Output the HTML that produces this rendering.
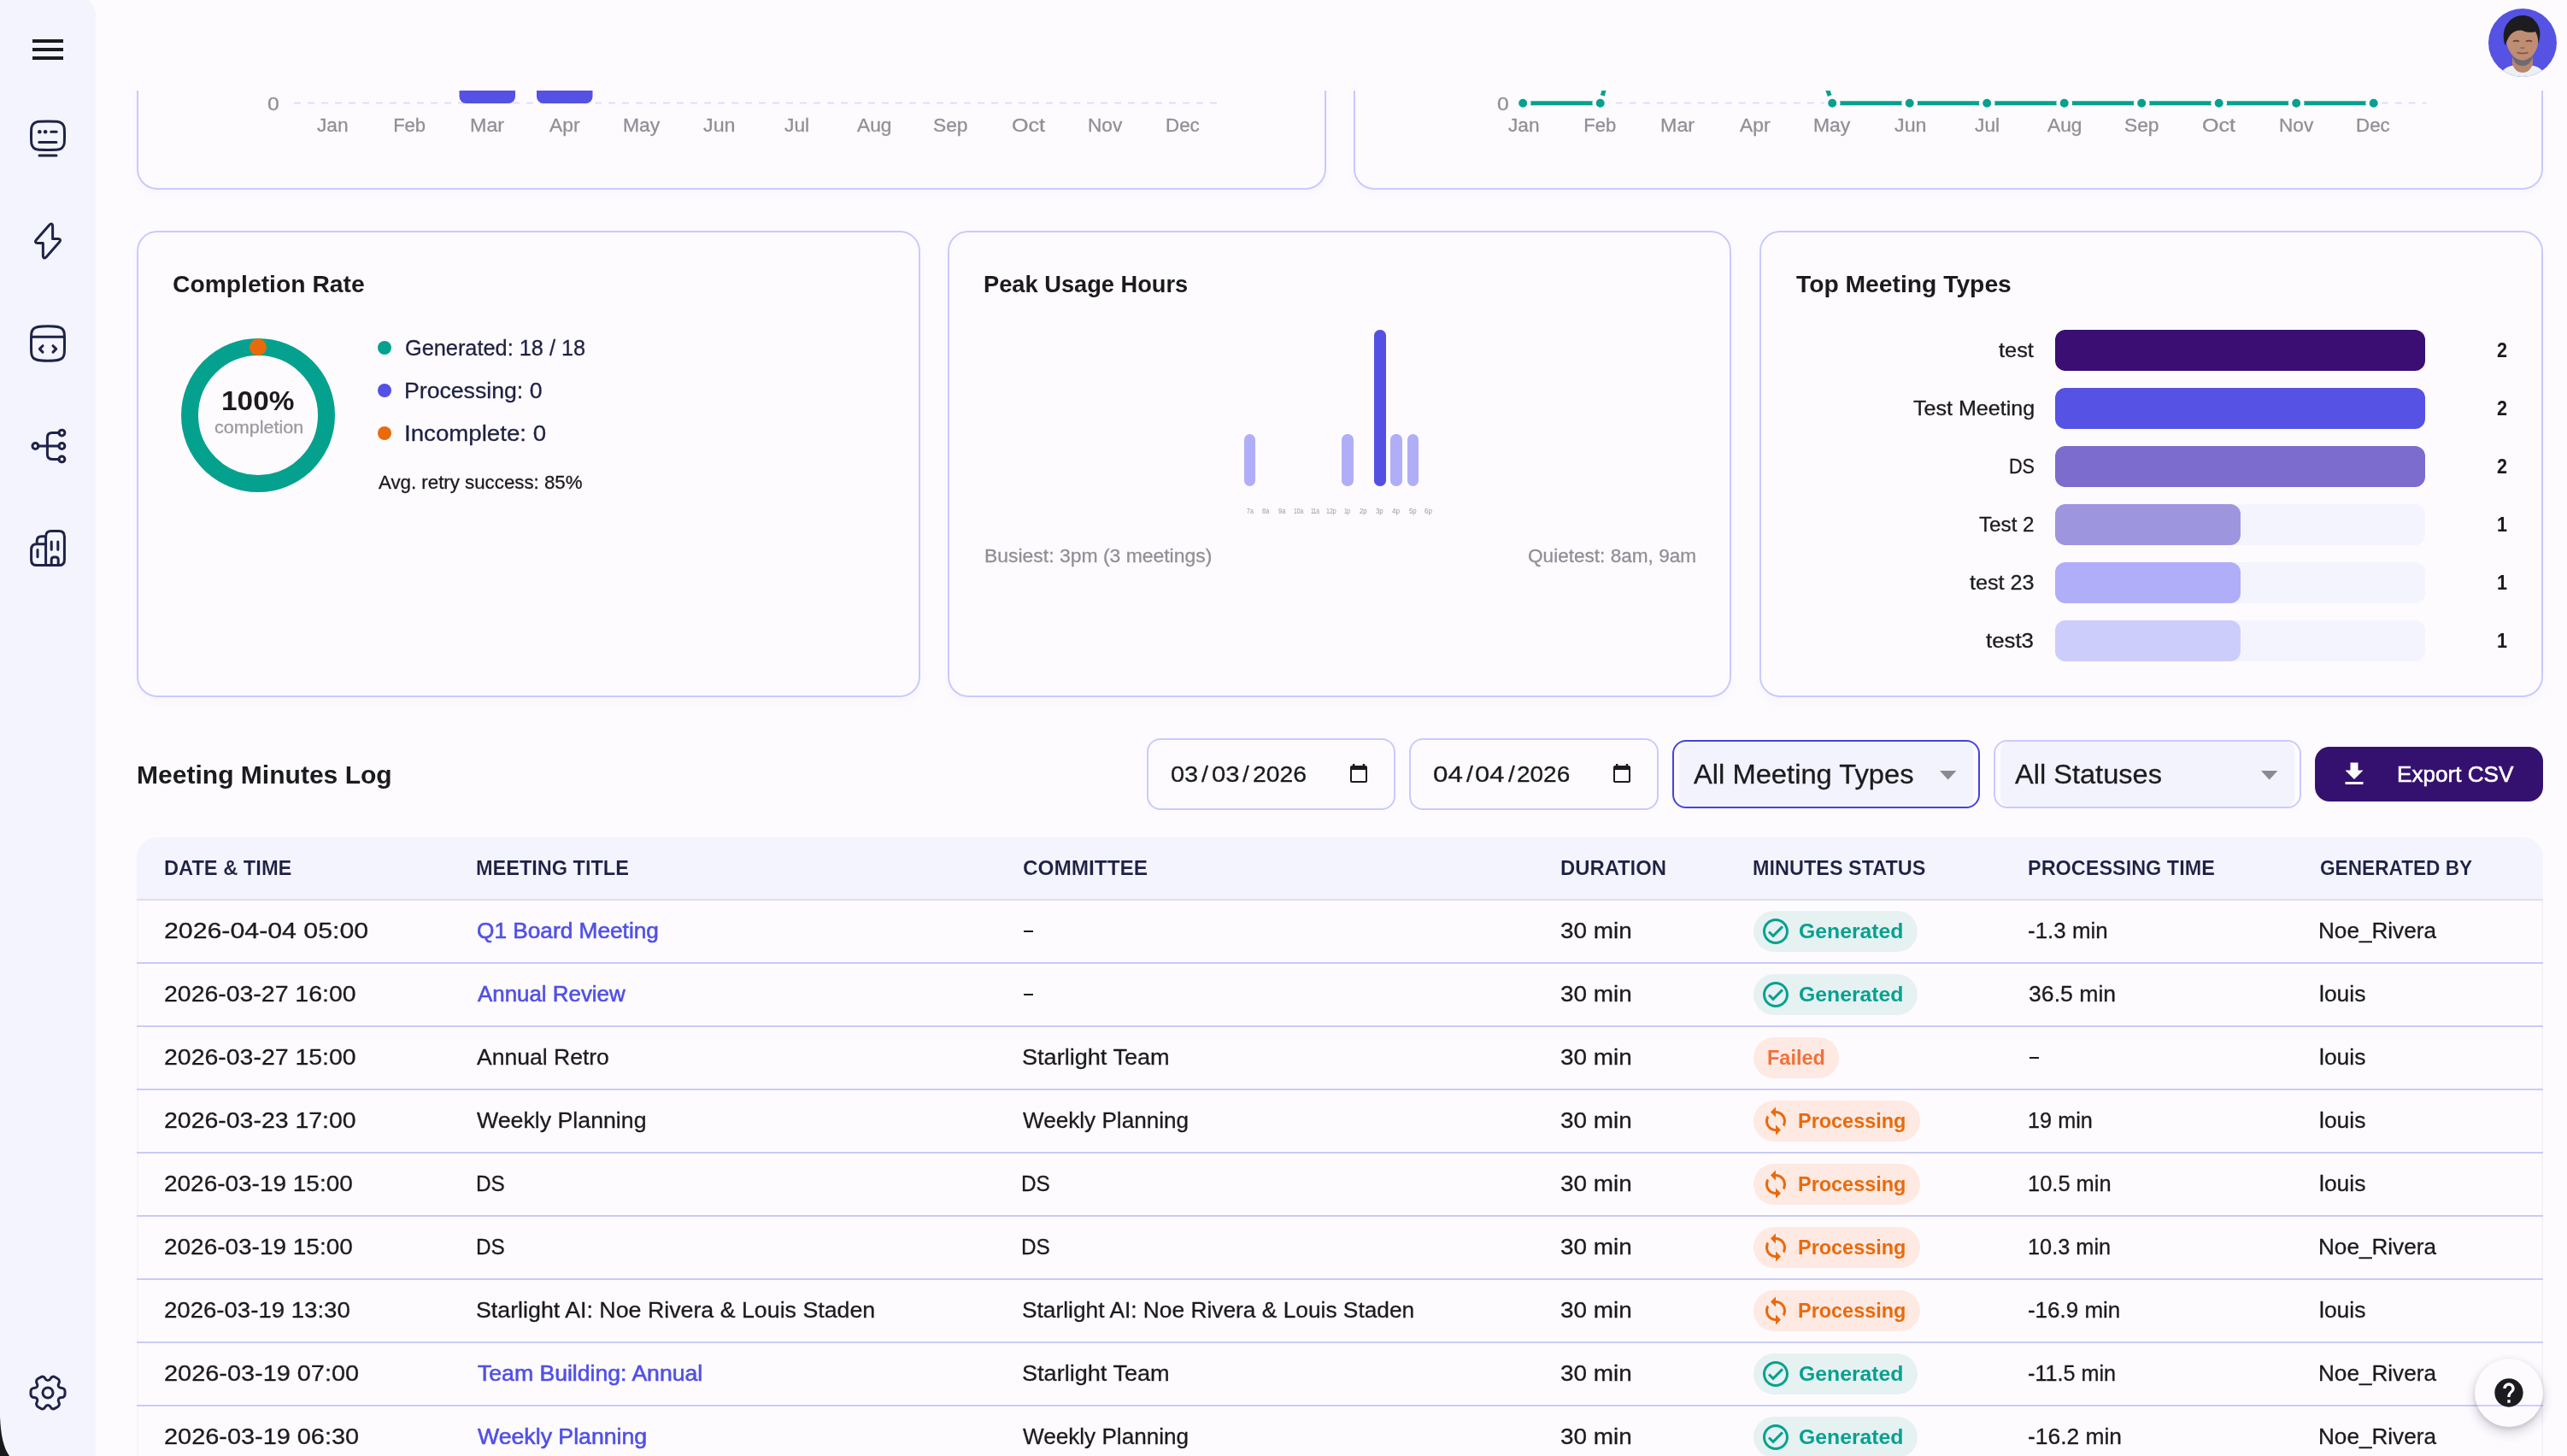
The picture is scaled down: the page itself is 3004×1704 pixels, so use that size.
<!DOCTYPE html>
<html lang="en"><head><meta charset="utf-8"><title>Meeting Minutes Analytics</title>
<style>
html,body{margin:0;padding:0;}
body{width:3004px;height:1704px;overflow:hidden;background:#FEFBFF;font-family:"Liberation Sans",sans-serif;position:relative;}
.abs{position:absolute;}
.t{position:absolute;white-space:pre;line-height:1em;transform-origin:0 0;font-family:"Liberation Sans",sans-serif;}
#clip{position:absolute;left:0;top:106px;width:3004px;height:1598px;overflow:hidden;}
#page{position:absolute;left:0;top:-106px;width:3004px;height:1704px;will-change:transform;}
.card{position:absolute;box-sizing:border-box;border:2px solid #C9CAFF;border-radius:24px;box-shadow:0 6px 10px rgba(90,90,200,0.035);}
#sidebar{position:absolute;left:0;top:-6px;width:112px;height:1710px;background:#F3F4FE;border-top-right-radius:24px;}
.ico{position:absolute;width:48px;height:48px;left:32px;fill:none;stroke:#1F2347;stroke-width:1.5;stroke-linecap:round;stroke-linejoin:round;}
.inp{position:absolute;box-sizing:border-box;border:2px solid #C9CAFF;border-radius:16px;}
.row{position:absolute;left:160px;width:2816px;height:2px;background:#C9CBF7;}
.badge{position:absolute;height:48px;border-radius:24px;}
.dash{position:absolute;width:11px;height:2.5px;background:#1B1B1F;}
svg{display:block;}
</style></head>
<body>
<div id="clip"><div id="page">
<div class="card" style="left:160px;top:-200px;width:1392px;height:422px"></div>
<div class="card" style="left:1584px;top:-200px;width:1392px;height:422px"></div>
<svg class="abs" style="left:0;top:0" width="3004" height="260" viewBox="0 0 3004 260">
<path d="M344 120.5H1430" stroke="#D6D7FF" stroke-width="1.6" stroke-dasharray="8 8" fill="none"/>
<path d="M1778.75 120.5H2839.5" stroke="#D6D7FF" stroke-width="1.6" stroke-dasharray="8 8" fill="none"/>
<rect x="537.5" y="40" width="65.5" height="81" rx="8" fill="#5551E4"/>
<rect x="628" y="40" width="65.5" height="81" rx="8" fill="#5551E4"/>
<path d="M1782.2 120.7H1872.7L1898.7 30.700000000000003M2112.2 30.700000000000003L2144.2 120.7H2777.7" stroke="#05A18F" stroke-width="5" fill="none" stroke-linejoin="round"/>
<circle cx="1782.2" cy="120.7" r="7.2" fill="#05A18F" stroke="#FEFBFF" stroke-width="4.4"/>
<circle cx="1872.7" cy="120.7" r="7.2" fill="#05A18F" stroke="#FEFBFF" stroke-width="4.4"/>
<circle cx="2144.2" cy="120.7" r="7.2" fill="#05A18F" stroke="#FEFBFF" stroke-width="4.4"/>
<circle cx="2234.7" cy="120.7" r="7.2" fill="#05A18F" stroke="#FEFBFF" stroke-width="4.4"/>
<circle cx="2325.2" cy="120.7" r="7.2" fill="#05A18F" stroke="#FEFBFF" stroke-width="4.4"/>
<circle cx="2415.7" cy="120.7" r="7.2" fill="#05A18F" stroke="#FEFBFF" stroke-width="4.4"/>
<circle cx="2506.2" cy="120.7" r="7.2" fill="#05A18F" stroke="#FEFBFF" stroke-width="4.4"/>
<circle cx="2596.7" cy="120.7" r="7.2" fill="#05A18F" stroke="#FEFBFF" stroke-width="4.4"/>
<circle cx="2687.2" cy="120.7" r="7.2" fill="#05A18F" stroke="#FEFBFF" stroke-width="4.4"/>
<circle cx="2777.7" cy="120.7" r="7.2" fill="#05A18F" stroke="#FEFBFF" stroke-width="4.4"/>
</svg>
<div class="card" style="left:160px;top:270px;width:917px;height:546px"></div>
<svg class="abs" style="left:202px;top:386px" width="200" height="200" viewBox="202 386 200 200">
<circle cx="302" cy="486" r="80" fill="none" stroke="#05A18F" stroke-width="20"/>
<circle cx="302" cy="406.2" r="10" fill="#E96A0A"/></svg>
<div class="abs" style="left:442px;top:399px;width:16px;height:16px;border-radius:8px;background:#05A18F"></div>
<div class="abs" style="left:442px;top:449px;width:16px;height:16px;border-radius:8px;background:#5551E4"></div>
<div class="abs" style="left:442px;top:499px;width:16px;height:16px;border-radius:8px;background:#E96A0A"></div>
<div class="card" style="left:1109px;top:270px;width:917px;height:546px"></div>
<div class="abs" style="left:1456.20px;top:508.0px;width:13.2px;height:60.8px;border-radius:6.6px;background:#AFAEF7"></div>
<div class="abs" style="left:1570.38px;top:508.0px;width:13.2px;height:60.8px;border-radius:6.6px;background:#AFAEF7"></div>
<div class="abs" style="left:1608.44px;top:385.8px;width:13.2px;height:183px;border-radius:6.6px;background:#5450E4"></div>
<div class="abs" style="left:1627.47px;top:508.0px;width:13.2px;height:60.8px;border-radius:6.6px;background:#AFAEF7"></div>
<div class="abs" style="left:1646.50px;top:508.0px;width:13.2px;height:60.8px;border-radius:6.6px;background:#AFAEF7"></div>
<div class="card" style="left:2059px;top:270px;width:917px;height:546px"></div>
<div class="abs" style="left:2405px;top:386px;width:433px;height:48px;border-radius:12px;background:#F3F4FE"><div style="width:433.0px;height:48px;border-radius:12px;background:#3A0E73"></div></div>
<div class="abs" style="left:2405px;top:454px;width:433px;height:48px;border-radius:12px;background:#F3F4FE"><div style="width:433.0px;height:48px;border-radius:12px;background:#5552E4"></div></div>
<div class="abs" style="left:2405px;top:522px;width:433px;height:48px;border-radius:12px;background:#F3F4FE"><div style="width:433.0px;height:48px;border-radius:12px;background:#7C6CCD"></div></div>
<div class="abs" style="left:2405px;top:590px;width:433px;height:48px;border-radius:12px;background:#F3F4FE"><div style="width:216.5px;height:48px;border-radius:12px;background:#9E95DF"></div></div>
<div class="abs" style="left:2405px;top:658px;width:433px;height:48px;border-radius:12px;background:#F3F4FE"><div style="width:216.5px;height:48px;border-radius:12px;background:#B0AEF9"></div></div>
<div class="abs" style="left:2405px;top:726px;width:433px;height:48px;border-radius:12px;background:#F3F4FE"><div style="width:216.5px;height:48px;border-radius:12px;background:#CDCDFC"></div></div>
<div class="inp" style="left:1342px;top:864px;width:291px;height:84px"></div>
<div class="inp" style="left:1649px;top:864px;width:292px;height:84px"></div>
<svg class="abs" style="left:1580px;top:894.2px" width="20" height="22" viewBox="0 0 20 22"><path d="M2.9 0h2.5v2.1h9.3V0h2.5v2.1H18a2 2 0 0 1 2 2V20a2 2 0 0 1-2 2H2a2 2 0 0 1-2-2V4.1a2 2 0 0 1 2-2h.9zM2 6.9V20h16V6.9z" fill="#1C1B1F" fill-rule="evenodd"/></svg>
<svg class="abs" style="left:1888px;top:894.2px" width="20" height="22" viewBox="0 0 20 22"><path d="M2.9 0h2.5v2.1h9.3V0h2.5v2.1H18a2 2 0 0 1 2 2V20a2 2 0 0 1-2 2H2a2 2 0 0 1-2-2V4.1a2 2 0 0 1 2-2h.9zM2 6.9V20h16V6.9z" fill="#1C1B1F" fill-rule="evenodd"/></svg>
<div class="inp" style="left:1957px;top:866px;width:360px;height:80px;border-color:#4542E0;background:#FDFBFF"><div style="position:absolute;left:6px;top:0;right:6px;bottom:0;border-radius:10px;background:#F3F3FE"></div></div>
<div class="inp" style="left:2333px;top:866px;width:360px;height:80px;background:#FDFBFF"><div style="position:absolute;left:6px;top:0;right:6px;bottom:0;border-radius:10px;background:#F3F3FE"></div></div>
<svg class="abs" style="left:2269.5px;top:902px" width="20" height="11" viewBox="0 0 20 11"><path d="M0 0h19.4L9.7 10.6z" fill="#8A8A90"/></svg>
<svg class="abs" style="left:2645.5px;top:902px" width="20" height="11" viewBox="0 0 20 11"><path d="M0 0h19.4L9.7 10.6z" fill="#8A8A90"/></svg>
<div class="abs" style="left:2709px;top:874px;width:267px;height:64px;border-radius:17px;background:#35116F"></div>
<svg class="abs" style="left:2737px;top:888px" width="36" height="36" viewBox="0 0 24 24"><path d="M19 9h-4V3H9v6H5l7 7 7-7zM5 18v2h14v-2H5z" fill="#fff"/></svg>
<div class="abs" style="left:160px;top:980px;width:2816px;height:740px;box-sizing:border-box;border-left:2px solid #F8F4FB;border-right:2px solid #F6F2FA;border-top-left-radius:24px;border-top-right-radius:24px"></div>
<div class="abs" style="left:160px;top:980px;width:2816px;height:72px;background:#F3F4FE;border-top-left-radius:24px;border-top-right-radius:24px"></div>
<div class="abs" style="left:160px;top:1052px;width:2816px;height:2px;background:#E1E0E4"></div>
<div class="row" style="top:1126px"></div>
<div class="row" style="top:1200px"></div>
<div class="row" style="top:1274px"></div>
<div class="row" style="top:1348px"></div>
<div class="row" style="top:1422px"></div>
<div class="row" style="top:1496px"></div>
<div class="row" style="top:1570px"></div>
<div class="row" style="top:1644px"></div>
<div class="row" style="top:1718px"></div>
<div class="badge" style="left:2052px;top:1066px;width:191.5px;background:#E6F1F2"></div>
<svg class="abs" style="left:2060px;top:1072px" width="36" height="36" viewBox="0 0 24 24"><path d="M12 2C6.48 2 2 6.48 2 12s4.48 10 10 10 10-4.48 10-10S17.52 2 12 2zm0 18c-4.41 0-8-3.59-8-8s3.59-8 8-8 8 3.59 8 8-3.59 8-8 8zm4.59-12.42L10 14.17l-2.59-2.58L6 13l4 4 8-8z" fill="#05A18F"/></svg>
<div class="badge" style="left:2052px;top:1140px;width:191.5px;background:#E6F1F2"></div>
<svg class="abs" style="left:2060px;top:1146px" width="36" height="36" viewBox="0 0 24 24"><path d="M12 2C6.48 2 2 6.48 2 12s4.48 10 10 10 10-4.48 10-10S17.52 2 12 2zm0 18c-4.41 0-8-3.59-8-8s3.59-8 8-8 8 3.59 8 8-3.59 8-8 8zm4.59-12.42L10 14.17l-2.59-2.58L6 13l4 4 8-8z" fill="#05A18F"/></svg>
<div class="badge" style="left:2052px;top:1214px;width:99.5px;background:#FEE9E3"></div>
<div class="badge" style="left:2052px;top:1288px;width:194.5px;background:#FEE9E3"></div>
<svg class="abs" style="left:2060px;top:1294px" width="36" height="36" viewBox="0 0 24 24"><path d="M12 4V1L8 5l4 4V6c3.31 0 6 2.69 6 6 0 1.01-.25 1.97-.7 2.8l1.46 1.46C19.54 15.03 20 13.57 20 12c0-4.42-3.58-8-8-8zm0 14c-3.31 0-6-2.69-6-6 0-1.01.25-1.97.7-2.8L5.24 7.74C4.46 8.97 4 10.43 4 12c0 4.42 3.58 8 8 8v3l4-4-4-4v3z" fill="#E96A0A"/></svg>
<div class="badge" style="left:2052px;top:1362px;width:194.5px;background:#FEE9E3"></div>
<svg class="abs" style="left:2060px;top:1368px" width="36" height="36" viewBox="0 0 24 24"><path d="M12 4V1L8 5l4 4V6c3.31 0 6 2.69 6 6 0 1.01-.25 1.97-.7 2.8l1.46 1.46C19.54 15.03 20 13.57 20 12c0-4.42-3.58-8-8-8zm0 14c-3.31 0-6-2.69-6-6 0-1.01.25-1.97.7-2.8L5.24 7.74C4.46 8.97 4 10.43 4 12c0 4.42 3.58 8 8 8v3l4-4-4-4v3z" fill="#E96A0A"/></svg>
<div class="badge" style="left:2052px;top:1436px;width:194.5px;background:#FEE9E3"></div>
<svg class="abs" style="left:2060px;top:1442px" width="36" height="36" viewBox="0 0 24 24"><path d="M12 4V1L8 5l4 4V6c3.31 0 6 2.69 6 6 0 1.01-.25 1.97-.7 2.8l1.46 1.46C19.54 15.03 20 13.57 20 12c0-4.42-3.58-8-8-8zm0 14c-3.31 0-6-2.69-6-6 0-1.01.25-1.97.7-2.8L5.24 7.74C4.46 8.97 4 10.43 4 12c0 4.42 3.58 8 8 8v3l4-4-4-4v3z" fill="#E96A0A"/></svg>
<div class="badge" style="left:2052px;top:1510px;width:194.5px;background:#FEE9E3"></div>
<svg class="abs" style="left:2060px;top:1516px" width="36" height="36" viewBox="0 0 24 24"><path d="M12 4V1L8 5l4 4V6c3.31 0 6 2.69 6 6 0 1.01-.25 1.97-.7 2.8l1.46 1.46C19.54 15.03 20 13.57 20 12c0-4.42-3.58-8-8-8zm0 14c-3.31 0-6-2.69-6-6 0-1.01.25-1.97.7-2.8L5.24 7.74C4.46 8.97 4 10.43 4 12c0 4.42 3.58 8 8 8v3l4-4-4-4v3z" fill="#E96A0A"/></svg>
<div class="badge" style="left:2052px;top:1584px;width:191.5px;background:#E6F1F2"></div>
<svg class="abs" style="left:2060px;top:1590px" width="36" height="36" viewBox="0 0 24 24"><path d="M12 2C6.48 2 2 6.48 2 12s4.48 10 10 10 10-4.48 10-10S17.52 2 12 2zm0 18c-4.41 0-8-3.59-8-8s3.59-8 8-8 8 3.59 8 8-3.59 8-8 8zm4.59-12.42L10 14.17l-2.59-2.58L6 13l4 4 8-8z" fill="#05A18F"/></svg>
<div class="badge" style="left:2052px;top:1658px;width:191.5px;background:#E6F1F2"></div>
<svg class="abs" style="left:2060px;top:1664px" width="36" height="36" viewBox="0 0 24 24"><path d="M12 2C6.48 2 2 6.48 2 12s4.48 10 10 10 10-4.48 10-10S17.52 2 12 2zm0 18c-4.41 0-8-3.59-8-8s3.59-8 8-8 8 3.59 8 8-3.59 8-8 8zm4.59-12.42L10 14.17l-2.59-2.58L6 13l4 4 8-8z" fill="#05A18F"/></svg>
<div class="dash" style="left:1198.2px;top:1088.55px"></div>
<div class="dash" style="left:1198.2px;top:1162.55px"></div>
<div class="dash" style="left:2375.2px;top:1236.55px"></div>
<span class="t" style="left:312.97px;top:111px;font-size:22px;color:#8F8F96;transform:scaleX(1.1220);-webkit-text-stroke:0.3px #8F8F96;">0</span>
<span class="t" style="left:1751.57px;top:111px;font-size:22px;color:#8F8F96;transform:scaleX(1.1220);-webkit-text-stroke:0.3px #8F8F96;">0</span>
<span class="t" style="left:371.40px;top:136px;font-size:22px;color:#8F8F96;transform:scaleX(1.0279);-webkit-text-stroke:0.3px #8F8F96;">Jan</span>
<span class="t" style="left:1764.60px;top:136px;font-size:22px;color:#8F8F96;transform:scaleX(1.0279);-webkit-text-stroke:0.3px #8F8F96;">Jan</span>
<span class="t" style="left:460.15px;top:136px;font-size:22px;color:#8F8F96;-webkit-text-stroke:0.3px #8F8F96;">Feb</span>
<span class="t" style="left:1853.35px;top:136px;font-size:22px;color:#8F8F96;-webkit-text-stroke:0.3px #8F8F96;">Feb</span>
<span class="t" style="left:549.60px;top:136px;font-size:22px;color:#8F8F96;transform:scaleX(1.0580);-webkit-text-stroke:0.3px #8F8F96;">Mar</span>
<span class="t" style="left:1942.80px;top:136px;font-size:22px;color:#8F8F96;transform:scaleX(1.0580);-webkit-text-stroke:0.3px #8F8F96;">Mar</span>
<span class="t" style="left:642.91px;top:136px;font-size:22px;color:#8F8F96;transform:scaleX(1.0377);-webkit-text-stroke:0.3px #8F8F96;">Apr</span>
<span class="t" style="left:2036.11px;top:136px;font-size:22px;color:#8F8F96;transform:scaleX(1.0377);-webkit-text-stroke:0.3px #8F8F96;">Apr</span>
<span class="t" style="left:728.87px;top:136px;font-size:22px;color:#8F8F96;transform:scaleX(1.0401);-webkit-text-stroke:0.3px #8F8F96;">May</span>
<span class="t" style="left:2122.07px;top:136px;font-size:22px;color:#8F8F96;transform:scaleX(1.0401);-webkit-text-stroke:0.3px #8F8F96;">May</span>
<span class="t" style="left:823.41px;top:136px;font-size:22px;color:#8F8F96;transform:scaleX(1.0569);-webkit-text-stroke:0.3px #8F8F96;">Jun</span>
<span class="t" style="left:2216.61px;top:136px;font-size:22px;color:#8F8F96;transform:scaleX(1.0569);-webkit-text-stroke:0.3px #8F8F96;">Jun</span>
<span class="t" style="left:917.91px;top:136px;font-size:22px;color:#8F8F96;transform:scaleX(1.0350);-webkit-text-stroke:0.3px #8F8F96;">Jul</span>
<span class="t" style="left:2311.11px;top:136px;font-size:22px;color:#8F8F96;transform:scaleX(1.0350);-webkit-text-stroke:0.3px #8F8F96;">Jul</span>
<span class="t" style="left:1002.91px;top:136px;font-size:22px;color:#8F8F96;transform:scaleX(1.0338);-webkit-text-stroke:0.3px #8F8F96;">Aug</span>
<span class="t" style="left:2396.11px;top:136px;font-size:22px;color:#8F8F96;transform:scaleX(1.0338);-webkit-text-stroke:0.3px #8F8F96;">Aug</span>
<span class="t" style="left:1092.37px;top:136px;font-size:22px;color:#8F8F96;transform:scaleX(1.0338);-webkit-text-stroke:0.3px #8F8F96;">Sep</span>
<span class="t" style="left:2485.57px;top:136px;font-size:22px;color:#8F8F96;transform:scaleX(1.0338);-webkit-text-stroke:0.3px #8F8F96;">Sep</span>
<span class="t" style="left:1183.53px;top:136px;font-size:22px;color:#8F8F96;transform:scaleX(1.1373);-webkit-text-stroke:0.3px #8F8F96;">Oct</span>
<span class="t" style="left:2576.73px;top:136px;font-size:22px;color:#8F8F96;transform:scaleX(1.1373);-webkit-text-stroke:0.3px #8F8F96;">Oct</span>
<span class="t" style="left:1273.38px;top:136px;font-size:22px;color:#8F8F96;transform:scaleX(1.0280);-webkit-text-stroke:0.3px #8F8F96;">Nov</span>
<span class="t" style="left:2666.58px;top:136px;font-size:22px;color:#8F8F96;transform:scaleX(1.0280);-webkit-text-stroke:0.3px #8F8F96;">Nov</span>
<span class="t" style="left:1364.14px;top:136px;font-size:22px;color:#8F8F96;transform:scaleX(1.0150);-webkit-text-stroke:0.3px #8F8F96;">Dec</span>
<span class="t" style="left:2757.34px;top:136px;font-size:22px;color:#8F8F96;transform:scaleX(1.0150);-webkit-text-stroke:0.3px #8F8F96;">Dec</span>
<span class="t" style="left:202.19px;top:319px;font-size:28px;color:#1B1B1F;font-weight:700;transform:scaleX(1.0100);">Completion Rate</span>
<span class="t" style="left:1151.08px;top:319px;font-size:28px;color:#1B1B1F;font-weight:700;transform:scaleX(0.9731);">Peak Usage Hours</span>
<span class="t" style="left:2101.55px;top:319px;font-size:28px;color:#1B1B1F;font-weight:700;transform:scaleX(1.0097);">Top Meeting Types</span>
<span class="t" style="left:160.03px;top:892px;font-size:29.5px;color:#1B1B1F;font-weight:700;transform:scaleX(1.0183);">Meeting Minutes Log</span>
<span class="t" style="left:258.72px;top:454px;font-size:31px;color:#1B1B1F;font-weight:700;transform:scaleX(1.0769);">100%</span>
<span class="t" style="left:250.56px;top:490px;font-size:20px;color:#9A9AA0;transform:scaleX(1.0772);-webkit-text-stroke:0.3px #9A9AA0;">completion</span>
<span class="t" style="left:473.97px;top:394px;font-size:26px;color:#1E2142;transform:scaleX(0.9737);-webkit-text-stroke:0.3px #1E2142;">Generated: 18 / 18</span>
<span class="t" style="left:472.90px;top:444px;font-size:26px;color:#1E2142;transform:scaleX(1.0250);-webkit-text-stroke:0.3px #1E2142;">Processing: 0</span>
<span class="t" style="left:472.83px;top:494px;font-size:26px;color:#1E2142;transform:scaleX(1.0638);-webkit-text-stroke:0.3px #1E2142;">Incomplete: 0</span>
<span class="t" style="left:442.95px;top:554px;font-size:22px;color:#1B1B1F;transform:scaleX(1.0125);-webkit-text-stroke:0.3px #1B1B1F;">Avg. retry success: 85%</span>
<span class="t" style="left:1458.70px;top:594px;font-size:8.5px;color:#9A9AA0;transform:scaleX(0.8224);">7a</span>
<span class="t" style="left:1477.43px;top:594px;font-size:8.5px;color:#9A9AA0;transform:scaleX(0.8841);">8a</span>
<span class="t" style="left:1496.46px;top:594px;font-size:8.5px;color:#9A9AA0;transform:scaleX(0.8841);">9a</span>
<span class="t" style="left:1513.99px;top:594px;font-size:8.5px;color:#9A9AA0;transform:scaleX(0.8025);">10a</span>
<span class="t" style="left:1533.76px;top:594px;font-size:8.5px;color:#9A9AA0;letter-spacing:-0.425px;transform:scaleX(0.7800);">11a</span>
<span class="t" style="left:1551.85px;top:594px;font-size:8.5px;color:#9A9AA0;transform:scaleX(0.8302);">12p</span>
<span class="t" style="left:1573.25px;top:594px;font-size:8.5px;color:#9A9AA0;letter-spacing:-0.425px;transform:scaleX(0.7800);">1p</span>
<span class="t" style="left:1591.41px;top:594px;font-size:8.5px;color:#9A9AA0;transform:scaleX(0.9252);">2p</span>
<span class="t" style="left:1610.44px;top:594px;font-size:8.5px;color:#9A9AA0;transform:scaleX(0.9252);">3p</span>
<span class="t" style="left:1629.37px;top:594px;font-size:8.5px;color:#9A9AA0;transform:scaleX(0.9458);">4p</span>
<span class="t" style="left:1648.50px;top:594px;font-size:8.5px;color:#9A9AA0;transform:scaleX(0.9252);">5p</span>
<span class="t" style="left:1667.43px;top:594px;font-size:8.5px;color:#9A9AA0;transform:scaleX(0.9458);">6p</span>
<span class="t" style="left:1151.71px;top:640px;font-size:22px;color:#8F8F96;transform:scaleX(1.0421);-webkit-text-stroke:0.3px #8F8F96;">Busiest: 3pm (3 meetings)</span>
<span class="t" style="left:1787.73px;top:640px;font-size:22px;color:#8F8F96;transform:scaleX(1.0266);-webkit-text-stroke:0.3px #8F8F96;">Quietest: 8am, 9am</span>
<span class="t" style="left:2338.86px;top:398px;font-size:24px;color:#1B1B1F;transform:scaleX(1.0556);-webkit-text-stroke:0.3px #1B1B1F;">test</span>
<span class="t" style="left:2922.10px;top:398px;font-size:24px;color:#1B1B1F;font-weight:700;transform:scaleX(0.9000);">2</span>
<span class="t" style="left:2239.26px;top:466px;font-size:24px;color:#1B1B1F;transform:scaleX(1.0450);-webkit-text-stroke:0.3px #1B1B1F;">Test Meeting</span>
<span class="t" style="left:2922.10px;top:466px;font-size:24px;color:#1B1B1F;font-weight:700;transform:scaleX(0.9000);">2</span>
<span class="t" style="left:2351.19px;top:534px;font-size:24px;color:#1B1B1F;letter-spacing:-0.243px;transform:scaleX(0.9000);-webkit-text-stroke:0.3px #1B1B1F;">DS</span>
<span class="t" style="left:2922.10px;top:534px;font-size:24px;color:#1B1B1F;font-weight:700;transform:scaleX(0.9000);">2</span>
<span class="t" style="left:2315.85px;top:602px;font-size:24px;color:#1B1B1F;transform:scaleX(1.0081);-webkit-text-stroke:0.3px #1B1B1F;">Test 2</span>
<span class="t" style="left:2922.10px;top:602px;font-size:24px;color:#1B1B1F;font-weight:700;transform:scaleX(0.9000);">1</span>
<span class="t" style="left:2304.86px;top:670px;font-size:24px;color:#1B1B1F;transform:scaleX(1.0486);-webkit-text-stroke:0.3px #1B1B1F;">test 23</span>
<span class="t" style="left:2922.10px;top:670px;font-size:24px;color:#1B1B1F;font-weight:700;transform:scaleX(0.9000);">1</span>
<span class="t" style="left:2324.46px;top:738px;font-size:24px;color:#1B1B1F;transform:scaleX(1.0753);-webkit-text-stroke:0.3px #1B1B1F;">test3</span>
<span class="t" style="left:2922.10px;top:738px;font-size:24px;color:#1B1B1F;font-weight:700;transform:scaleX(0.9000);">1</span>
<span class="t" style="left:1370.15px;top:893px;font-size:26px;color:#1B1B1F;transform:scaleX(1.1131);-webkit-text-stroke:0.3px #1B1B1F;">03</span>
<span class="t" style="left:1406.26px;top:893px;font-size:26px;color:#1B1B1F;transform:scaleX(1.0964);-webkit-text-stroke:0.3px #1B1B1F;">/</span>
<span class="t" style="left:1417.74px;top:893px;font-size:26px;color:#1B1B1F;transform:scaleX(1.1239);-webkit-text-stroke:0.3px #1B1B1F;">03</span>
<span class="t" style="left:1454.36px;top:893px;font-size:26px;color:#1B1B1F;transform:scaleX(1.0723);-webkit-text-stroke:0.3px #1B1B1F;">/</span>
<span class="t" style="left:1465.97px;top:893px;font-size:26px;color:#1B1B1F;transform:scaleX(1.0886);-webkit-text-stroke:0.3px #1B1B1F;">2026</span>
<span class="t" style="left:1677.28px;top:893px;font-size:26px;color:#1B1B1F;transform:scaleX(1.2032);-webkit-text-stroke:0.3px #1B1B1F;">04</span>
<span class="t" style="left:1716.06px;top:893px;font-size:26px;color:#1B1B1F;transform:scaleX(1.0964);-webkit-text-stroke:0.3px #1B1B1F;">/</span>
<span class="t" style="left:1726.49px;top:893px;font-size:26px;color:#1B1B1F;transform:scaleX(1.1888);-webkit-text-stroke:0.3px #1B1B1F;">04</span>
<span class="t" style="left:1764.76px;top:893px;font-size:26px;color:#1B1B1F;transform:scaleX(1.0723);-webkit-text-stroke:0.3px #1B1B1F;">/</span>
<span class="t" style="left:1775.29px;top:893px;font-size:26px;color:#1B1B1F;transform:scaleX(1.0762);-webkit-text-stroke:0.3px #1B1B1F;">2026</span>
<span class="t" style="left:1982.25px;top:890px;font-size:32px;color:#1B1B1F;transform:scaleX(1.0220);-webkit-text-stroke:0.3px #1B1B1F;">All Meeting Types</span>
<span class="t" style="left:2357.95px;top:890px;font-size:32px;color:#1B1B1F;transform:scaleX(1.0174);-webkit-text-stroke:0.3px #1B1B1F;">All Statuses</span>
<span class="t" style="left:2805.42px;top:893px;font-size:26.5px;color:#FFFFFF;transform:scaleX(0.9857);-webkit-text-stroke:0.6px #FFFFFF;">Export CSV</span>
<span class="t" style="left:191.76px;top:1004px;font-size:24px;color:#1E2142;font-weight:700;transform:scaleX(0.9856);-webkit-text-stroke:0.12px #F3F4FE;">DATE &amp; TIME</span>
<span class="t" style="left:557.26px;top:1004px;font-size:24px;color:#1E2142;font-weight:700;transform:scaleX(0.9792);-webkit-text-stroke:0.12px #F3F4FE;">MEETING TITLE</span>
<span class="t" style="left:1197.14px;top:1004px;font-size:24px;color:#1E2142;font-weight:700;transform:scaleX(1.0142);-webkit-text-stroke:0.12px #F3F4FE;">COMMITTEE</span>
<span class="t" style="left:1825.60px;top:1004px;font-size:24px;color:#1E2142;font-weight:700;transform:scaleX(0.9929);-webkit-text-stroke:0.12px #F3F4FE;">DURATION</span>
<span class="t" style="left:2051.26px;top:1004px;font-size:24px;color:#1E2142;font-weight:700;transform:scaleX(0.9770);-webkit-text-stroke:0.12px #F3F4FE;">MINUTES STATUS</span>
<span class="t" style="left:2372.51px;top:1004px;font-size:24px;color:#1E2142;font-weight:700;transform:scaleX(0.9769);-webkit-text-stroke:0.12px #F3F4FE;">PROCESSING TIME</span>
<span class="t" style="left:2714.99px;top:1004px;font-size:24px;color:#1E2142;font-weight:700;transform:scaleX(0.9429);-webkit-text-stroke:0.12px #F3F4FE;">GENERATED BY</span>
<span class="t" style="left:192.31px;top:1076px;font-size:26px;color:#1B1B1F;transform:scaleX(1.1647);-webkit-text-stroke:0.3px #1B1B1F;">2026-04-04 05:00</span>
<span class="t" style="left:557.59px;top:1076px;font-size:26px;color:#5050E6;transform:scaleX(1.0089);-webkit-text-stroke:0.6px #5050E6;">Q1 Board Meeting</span>
<span class="t" style="left:1826.46px;top:1076px;font-size:26px;color:#1B1B1F;transform:scaleX(1.0731);-webkit-text-stroke:0.3px #1B1B1F;">30 min</span>
<span class="t" style="left:2372.95px;top:1076px;font-size:26px;color:#1B1B1F;transform:scaleX(0.9972);-webkit-text-stroke:0.3px #1B1B1F;">-1.3 min</span>
<span class="t" style="left:2713.19px;top:1076px;font-size:26px;color:#1B1B1F;transform:scaleX(1.0046);-webkit-text-stroke:0.3px #1B1B1F;">Noe_Rivera</span>
<span class="t" style="left:2104.80px;top:1078px;font-size:24px;color:#05A18F;font-weight:700;transform:scaleX(1.0313);">Generated</span>
<span class="t" style="left:192.37px;top:1150px;font-size:26px;color:#1B1B1F;transform:scaleX(1.0937);-webkit-text-stroke:0.3px #1B1B1F;">2026-03-27 16:00</span>
<span class="t" style="left:558.60px;top:1150px;font-size:26px;color:#5050E6;transform:scaleX(0.9957);-webkit-text-stroke:0.6px #5050E6;">Annual Review</span>
<span class="t" style="left:1826.46px;top:1150px;font-size:26px;color:#1B1B1F;transform:scaleX(1.0731);-webkit-text-stroke:0.3px #1B1B1F;">30 min</span>
<span class="t" style="left:2373.95px;top:1150px;font-size:26px;color:#1B1B1F;transform:scaleX(1.0247);-webkit-text-stroke:0.3px #1B1B1F;">36.5 min</span>
<span class="t" style="left:2714.18px;top:1150px;font-size:26px;color:#1B1B1F;transform:scaleX(1.0185);-webkit-text-stroke:0.3px #1B1B1F;">louis</span>
<span class="t" style="left:2104.80px;top:1152px;font-size:24px;color:#05A18F;font-weight:700;transform:scaleX(1.0313);">Generated</span>
<span class="t" style="left:192.37px;top:1224px;font-size:26px;color:#1B1B1F;transform:scaleX(1.0944);-webkit-text-stroke:0.3px #1B1B1F;">2026-03-27 15:00</span>
<span class="t" style="left:558.45px;top:1224px;font-size:26px;color:#1B1B1F;transform:scaleX(1.0204);-webkit-text-stroke:0.3px #1B1B1F;">Annual Retro</span>
<span class="t" style="left:1196.21px;top:1224px;font-size:26px;color:#1B1B1F;transform:scaleX(1.0420);-webkit-text-stroke:0.3px #1B1B1F;">Starlight Team</span>
<span class="t" style="left:1826.46px;top:1224px;font-size:26px;color:#1B1B1F;transform:scaleX(1.0731);-webkit-text-stroke:0.3px #1B1B1F;">30 min</span>
<span class="t" style="left:2714.18px;top:1224px;font-size:26px;color:#1B1B1F;transform:scaleX(1.0185);-webkit-text-stroke:0.3px #1B1B1F;">louis</span>
<span class="t" style="left:2067.57px;top:1226px;font-size:24px;color:#F0713A;font-weight:700;transform:scaleX(0.9787);">Failed</span>
<span class="t" style="left:192.37px;top:1298px;font-size:26px;color:#1B1B1F;transform:scaleX(1.0944);-webkit-text-stroke:0.3px #1B1B1F;">2026-03-23 17:00</span>
<span class="t" style="left:558.45px;top:1298px;font-size:26px;color:#1B1B1F;transform:scaleX(1.0275);-webkit-text-stroke:0.3px #1B1B1F;">Weekly Planning</span>
<span class="t" style="left:1197.25px;top:1298px;font-size:26px;color:#1B1B1F;transform:scaleX(1.0046);-webkit-text-stroke:0.3px #1B1B1F;">Weekly Planning</span>
<span class="t" style="left:1826.46px;top:1298px;font-size:26px;color:#1B1B1F;transform:scaleX(1.0731);-webkit-text-stroke:0.3px #1B1B1F;">30 min</span>
<span class="t" style="left:2372.97px;top:1298px;font-size:26px;color:#1B1B1F;transform:scaleX(0.9720);-webkit-text-stroke:0.3px #1B1B1F;">19 min</span>
<span class="t" style="left:2714.18px;top:1298px;font-size:26px;color:#1B1B1F;transform:scaleX(1.0185);-webkit-text-stroke:0.3px #1B1B1F;">louis</span>
<span class="t" style="left:2103.57px;top:1300px;font-size:24px;color:#E96A0A;font-weight:700;transform:scaleX(0.9767);">Processing</span>
<span class="t" style="left:192.39px;top:1372px;font-size:26px;color:#1B1B1F;transform:scaleX(1.0753);-webkit-text-stroke:0.3px #1B1B1F;">2026-03-19 15:00</span>
<span class="t" style="left:556.57px;top:1372px;font-size:26px;color:#1B1B1F;transform:scaleX(0.9361);-webkit-text-stroke:0.3px #1B1B1F;">DS</span>
<span class="t" style="left:1195.37px;top:1372px;font-size:26px;color:#1B1B1F;transform:scaleX(0.9361);-webkit-text-stroke:0.3px #1B1B1F;">DS</span>
<span class="t" style="left:1826.46px;top:1372px;font-size:26px;color:#1B1B1F;transform:scaleX(1.0731);-webkit-text-stroke:0.3px #1B1B1F;">30 min</span>
<span class="t" style="left:2372.97px;top:1372px;font-size:26px;color:#1B1B1F;transform:scaleX(0.9789);-webkit-text-stroke:0.3px #1B1B1F;">10.5 min</span>
<span class="t" style="left:2714.18px;top:1372px;font-size:26px;color:#1B1B1F;transform:scaleX(1.0185);-webkit-text-stroke:0.3px #1B1B1F;">louis</span>
<span class="t" style="left:2103.57px;top:1374px;font-size:24px;color:#E96A0A;font-weight:700;transform:scaleX(0.9767);">Processing</span>
<span class="t" style="left:192.39px;top:1446px;font-size:26px;color:#1B1B1F;transform:scaleX(1.0753);-webkit-text-stroke:0.3px #1B1B1F;">2026-03-19 15:00</span>
<span class="t" style="left:556.57px;top:1446px;font-size:26px;color:#1B1B1F;transform:scaleX(0.9361);-webkit-text-stroke:0.3px #1B1B1F;">DS</span>
<span class="t" style="left:1195.37px;top:1446px;font-size:26px;color:#1B1B1F;transform:scaleX(0.9361);-webkit-text-stroke:0.3px #1B1B1F;">DS</span>
<span class="t" style="left:1826.46px;top:1446px;font-size:26px;color:#1B1B1F;transform:scaleX(1.0731);-webkit-text-stroke:0.3px #1B1B1F;">30 min</span>
<span class="t" style="left:2372.97px;top:1446px;font-size:26px;color:#1B1B1F;transform:scaleX(0.9737);-webkit-text-stroke:0.3px #1B1B1F;">10.3 min</span>
<span class="t" style="left:2713.19px;top:1446px;font-size:26px;color:#1B1B1F;transform:scaleX(1.0046);-webkit-text-stroke:0.3px #1B1B1F;">Noe_Rivera</span>
<span class="t" style="left:2103.57px;top:1448px;font-size:24px;color:#E96A0A;font-weight:700;transform:scaleX(0.9767);">Processing</span>
<span class="t" style="left:192.40px;top:1520px;font-size:26px;color:#1B1B1F;transform:scaleX(1.0606);-webkit-text-stroke:0.3px #1B1B1F;">2026-03-19 13:30</span>
<span class="t" style="left:557.42px;top:1520px;font-size:26px;color:#1B1B1F;transform:scaleX(1.0296);-webkit-text-stroke:0.3px #1B1B1F;">Starlight AI: Noe Rivera &amp; Louis Staden</span>
<span class="t" style="left:1196.24px;top:1520px;font-size:26px;color:#1B1B1F;transform:scaleX(1.0120);-webkit-text-stroke:0.3px #1B1B1F;">Starlight AI: Noe Rivera &amp; Louis Staden</span>
<span class="t" style="left:1826.46px;top:1520px;font-size:26px;color:#1B1B1F;transform:scaleX(1.0731);-webkit-text-stroke:0.3px #1B1B1F;">30 min</span>
<span class="t" style="left:2372.95px;top:1520px;font-size:26px;color:#1B1B1F;-webkit-text-stroke:0.3px #1B1B1F;">-16.9 min</span>
<span class="t" style="left:2714.18px;top:1520px;font-size:26px;color:#1B1B1F;transform:scaleX(1.0185);-webkit-text-stroke:0.3px #1B1B1F;">louis</span>
<span class="t" style="left:2103.57px;top:1522px;font-size:24px;color:#E96A0A;font-weight:700;transform:scaleX(0.9767);">Processing</span>
<span class="t" style="left:192.36px;top:1594px;font-size:26px;color:#1B1B1F;transform:scaleX(1.1111);-webkit-text-stroke:0.3px #1B1B1F;">2026-03-19 07:00</span>
<span class="t" style="left:558.61px;top:1594px;font-size:26px;color:#5050E6;transform:scaleX(1.0230);-webkit-text-stroke:0.6px #5050E6;">Team Building: Annual</span>
<span class="t" style="left:1196.21px;top:1594px;font-size:26px;color:#1B1B1F;transform:scaleX(1.0420);-webkit-text-stroke:0.3px #1B1B1F;">Starlight Team</span>
<span class="t" style="left:1826.46px;top:1594px;font-size:26px;color:#1B1B1F;transform:scaleX(1.0731);-webkit-text-stroke:0.3px #1B1B1F;">30 min</span>
<span class="t" style="left:2372.98px;top:1594px;font-size:26px;color:#1B1B1F;transform:scaleX(0.9685);-webkit-text-stroke:0.3px #1B1B1F;">-11.5 min</span>
<span class="t" style="left:2713.19px;top:1594px;font-size:26px;color:#1B1B1F;transform:scaleX(1.0046);-webkit-text-stroke:0.3px #1B1B1F;">Noe_Rivera</span>
<span class="t" style="left:2104.80px;top:1596px;font-size:24px;color:#05A18F;font-weight:700;transform:scaleX(1.0313);">Generated</span>
<span class="t" style="left:192.36px;top:1668px;font-size:26px;color:#1B1B1F;transform:scaleX(1.1111);-webkit-text-stroke:0.3px #1B1B1F;">2026-03-19 06:30</span>
<span class="t" style="left:558.61px;top:1668px;font-size:26px;color:#5050E6;transform:scaleX(1.0259);-webkit-text-stroke:0.6px #5050E6;">Weekly Planning</span>
<span class="t" style="left:1197.25px;top:1668px;font-size:26px;color:#1B1B1F;transform:scaleX(1.0046);-webkit-text-stroke:0.3px #1B1B1F;">Weekly Planning</span>
<span class="t" style="left:1826.46px;top:1668px;font-size:26px;color:#1B1B1F;transform:scaleX(1.0731);-webkit-text-stroke:0.3px #1B1B1F;">30 min</span>
<span class="t" style="left:2372.94px;top:1668px;font-size:26px;color:#1B1B1F;transform:scaleX(1.0149);-webkit-text-stroke:0.3px #1B1B1F;">-16.2 min</span>
<span class="t" style="left:2713.19px;top:1668px;font-size:26px;color:#1B1B1F;transform:scaleX(1.0046);-webkit-text-stroke:0.3px #1B1B1F;">Noe_Rivera</span>
<span class="t" style="left:2104.80px;top:1670px;font-size:24px;color:#05A18F;font-weight:700;transform:scaleX(1.0313);">Generated</span>
</div></div>
<div id="sidebar"></div>
<div class="abs" style="left:38px;top:46px;width:36px;height:4px;background:#1C1B1F"></div>
<div class="abs" style="left:38px;top:56px;width:36px;height:4px;background:#1C1B1F"></div>
<div class="abs" style="left:38px;top:66px;width:36px;height:4px;background:#1C1B1F"></div>
<svg class="ico" style="top:138px" viewBox="0 0 24 24"><path d="M12 2.05c6.3 0 7.1.1 8.4 1.35 1.25 1.3 1.35 2.1 1.35 7s-.1 5.7-1.35 7c-1.3 1.25-2.1 1.35-8.4 1.35s-7.1-.1-8.4-1.35c-1.25-1.3-1.35-2.1-1.35-7s.1-5.7 1.35-7C4.9 2.15 5.7 2.05 12 2.05z"/><circle cx="7.15" cy="8.1" r="1.15" fill="#1F2347" stroke="none"/><circle cx="10.55" cy="8.1" r="1.15" fill="#1F2347" stroke="none"/><path d="M13.85 8.1h3.25M6.9 14.2h10.05M7 22h10"/></svg>
<svg class="ico" style="top:258px" viewBox="0 0 24 24"><path d="M6.09 13.28h3.09v7.2c0 1.68.91 2.02 2.02.76l7.57-8.6c.93-1.05.54-1.92-.87-1.92h-3.09v-7.2c0-1.68-.91-2.02-2.02-.76l-7.57 8.6c-.92 1.06-.53 1.92.87 1.92z"/></svg>
<svg class="ico" style="top:378px" viewBox="0 0 24 24"><path d="M12 1.9c5.6 0 7.3.4 8.55 1.65C21.8 4.8 21.75 6.6 21.75 12s.05 7.2-1.2 8.45C19.3 21.7 17.6 22.1 12 22.1s-7.3-.4-8.55-1.65C2.2 19.2 2.25 17.400 2.25 12s-.05-7.2 1.2-8.45C4.7 2.3 6.4 1.9 12 1.9z"/><path d="M2.5 8.1h19M9 13.35l-1.85 1.85L9 17.05M15 13.35l1.85 1.85L15 17.05"/></svg>
<svg class="ico" style="top:498px" viewBox="0 0 24 24"><circle cx="4.7" cy="12" r="1.72"/><circle cx="20.2" cy="4.3" r="1.72"/><circle cx="20.2" cy="12" r="1.72"/><circle cx="20.2" cy="19.7" r="1.72"/><path d="M6.3 12h12.3M18.6 4.3h-4.1c-2 0-2.8.8-2.8 2.8v9.8c0 2 .8 2.8 2.8 2.8h4.1"/></svg>
<svg class="ico" style="top:618px" viewBox="0 0 24 24"><path d="M10.8 21.8V5c0-2.2 1-3.2 3.2-3.2h4.5c2.2 0 3.2 1 3.2 3.2v13.6c0 2.2-1 3.2-3.2 3.2H5.5c-2.2 0-3.2-1-3.2-3.2v-6c0-2.2 1-3.2 3.2-3.2h5.3"/><path d="M5.6 9.2V7.6c0-1.9.8-2.7 2.7-2.7h2.4M14.1 8v4.6M17.9 8v4.6M6 12.7v4.2M14.1 21.8v-3.3c0-1 .5-1.5 1.5-1.5h1c1 0 1.5.5 1.5 1.5v3.3"/></svg>
<svg class="ico" style="top:1606px" viewBox="0 0 24 24"><path d="M12 15a3 3 0 1 0 0-6 3 3 0 0 0 0 6z"/><path d="M2 12.88v-1.76c0-1.04.85-1.9 1.9-1.9 1.81 0 2.55-1.28 1.64-2.85-.52-.9-.21-2.07.7-2.59l1.73-.99c.79-.47 1.81-.19 2.28.6l.11.19c.9 1.57 2.38 1.57 3.29 0l.11-.19c.47-.79 1.49-1.07 2.28-.6l1.73.99c.91.52 1.22 1.69.7 2.59-.91 1.57-.17 2.85 1.64 2.85 1.04 0 1.9.85 1.9 1.9v1.76c0 1.04-.85 1.9-1.9 1.9-1.81 0-2.55 1.28-1.64 2.85.52.91.21 2.07-.7 2.59l-1.73.99c-.79.47-1.81.19-2.28-.6l-.11-.19c-.9-1.57-2.38-1.57-3.29 0l-.11.19c-.47.79-1.49 1.07-2.28.6l-1.73-.99a1.899 1.899 0 0 1-.7-2.59c.91-1.57.17-2.85-1.64-2.85-1.05 0-1.9-.86-1.9-1.9z"/></svg>
<svg class="abs" style="left:0;top:1656px" width="14" height="48" viewBox="0 0 14 48"><path d="M0 2C1 24 4 38 11 48H0z" fill="#1A1A1C"/></svg>
<svg class="abs" style="left:2912px;top:10px" width="80" height="80" viewBox="0 0 80 80">
<defs><clipPath id="av"><circle cx="40" cy="40" r="40"/></clipPath></defs>
<g clip-path="url(#av)"><rect width="80" height="80" fill="#5552E4"/>
<path d="M13 82c1-8 6-13 14-15l9-2h8l9 2c8 2 13 7 14 15z" fill="#ECEFF1"/>
<path d="M28 56v9c2 6 6 10 12 10s10-4 12-10v-9z" fill="#B8876C"/>
<path d="M27.500 55c2 8 6 12 12.500 12s10.500-4 12.500-12c-4 4-21 4-25 0z" fill="#6D6A73"/>
<path d="M21 36c0-9 7-15 19-15s18.500 6 18.500 15c0 7-2 13-6 18-3.500 4-8 6.500-12.500 6.500S31 58 27.500 54c-4-5-6.500-11-6.500-18z" fill="#BE8D72"/>
<path d="M19.500 43c-3-9-2.500-20 4-27 5-6 13-9 21-7.500 4 .5 8 3 10 6 5 5 7 13 5.500 20l-1.500 7c-.5-6-1-11-3.500-14.500-5 1.500-11 1-16-1.500-5-.5-10 1.500-13 5-3 3.500-4.500 7.500-6 12z" fill="#1D1C1E"/>
<path d="M29 38.500q3.500-1.800 7 0M44 38.500q3.500-1.800 7 0" stroke="#5d463f" stroke-width="1.600" fill="none"/>
<path d="M33.500 51.500q6.500 2 13 0" stroke="#7a5346" stroke-width="1.600" fill="none"/>
<path d="M37.500 45.500q2.500 1.500 5 0" stroke="#8a6250" stroke-width="1.400" fill="none"/>
</g></svg>
<div class="abs" style="left:2896px;top:1590px;width:80px;height:80px;border-radius:40px;background:#FEFBFF;box-shadow:0 6px 12px 2px rgba(40,30,60,0.16),0 2px 5px rgba(40,30,60,0.14);overflow:hidden"><div style="position:absolute;left:0;top:54px;width:80px;height:2px;background:#CDCEF9"></div></div>
<svg class="abs" style="left:2916px;top:1610px" width="40" height="40" viewBox="0 0 24 24"><path d="M12 2C6.48 2 2 6.48 2 12s4.48 10 10 10 10-4.48 10-10S17.52 2 12 2zm1 17h-2v-2h2v2zm2.07-7.75l-.9.92C13.45 12.9 13 13.5 13 15h-2v-.5c0-1.1.45-2.1 1.17-2.83l1.24-1.26c.37-.36.59-.86.59-1.41 0-1.1-.9-2-2-2s-2 .9-2 2H8c0-2.21 1.79-4 4-4s4 1.79 4 4c0 .88-.36 1.68-.93 2.25z" fill="#1C1B1F"/></svg>
<script>(function(){var w=window.innerWidth;if(w&&Math.abs(w-3004)>2){document.documentElement.style.zoom=w/3004;}})();</script>
</body></html>
